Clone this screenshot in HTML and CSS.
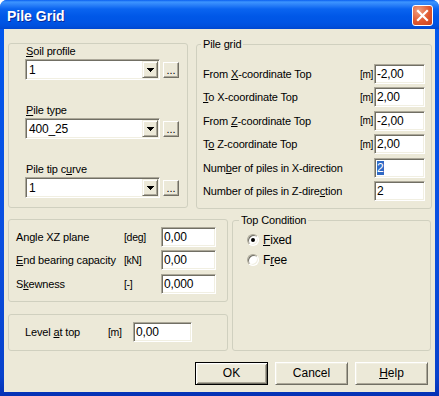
FILE: index.html
```html
<!DOCTYPE html>
<html lang="en">
<head>
  <meta charset="UTF-8">
  <title>Pile Grid</title>
  <link rel="stylesheet" href="styles.css">
</head>
<body>
  <div class="window">
    <div class="titlebar">
      <span class="title">Pile Grid</span>
      <button class="close" aria-label="Close">
        <svg width="13" height="13" viewBox="0 0 13 13"><path d="M2 2L11 11M11 2L2 11" stroke="#fff" stroke-width="2.2" stroke-linecap="square"/></svg>
      </button>
    </div>

    <div class="client">
      <div class="top-row">
        <fieldset class="group soil">
          <div class="soil-fields">
            <div class="field">
              <label><u>S</u>oil profile</label>
              <div class="combo-row">
                <div class="combo"><span class="combo-text">1</span><span class="drop"><svg width="7" height="4"><path d="M0 0h7L3.5 4z"/></svg></span></div>
                <button class="more">...</button>
              </div>
            </div>
            <div class="field">
              <label><u>P</u>ile type</label>
              <div class="combo-row">
                <div class="combo"><span class="combo-text">400_25</span><span class="drop"><svg width="7" height="4"><path d="M0 0h7L3.5 4z"/></svg></span></div>
                <button class="more">...</button>
              </div>
            </div>
            <div class="field">
              <label>Pile tip c<u>u</u>rve</label>
              <div class="combo-row">
                <div class="combo"><span class="combo-text">1</span><span class="drop"><svg width="7" height="4"><path d="M0 0h7L3.5 4z"/></svg></span></div>
                <button class="more">...</button>
              </div>
            </div>
          </div>
        </fieldset>

        <fieldset class="group grid">
          <legend>Pile grid</legend>
          <div class="params grid-params">
            <span>From <u>X</u>-coordinate Top</span><span class="unit">[m]</span><span class="edit">-2,00</span>
            <span><u>T</u>o X-coordinate Top</span><span class="unit">[m]</span><span class="edit">2,00</span>
            <span>From <u>Z</u>-coordinate Top</span><span class="unit">[m]</span><span class="edit">-2,00</span>
            <span>T<u>o</u> Z-coordinate Top</span><span class="unit">[m]</span><span class="edit">2,00</span>
            <span>Num<u>b</u>er of piles in X-direction</span><span></span><span class="edit"><span class="sel">2</span></span>
            <span>Number of piles in Z-dire<u>c</u>tion</span><span></span><span class="edit">2</span>
          </div>
        </fieldset>
      </div>

      <div class="bottom-row">
        <div class="left-col">
          <fieldset class="group angle">
            <div class="params angle-params">
              <span>Angle XZ plane</span><span class="unit">[deg]</span><span class="edit">0,00</span>
              <span><u>E</u>nd bearing capacity</span><span class="unit">[kN]</span><span class="edit">0,00</span>
              <span>S<u>k</u>ewness</span><span class="unit">[-]</span><span class="edit">0,000</span>
            </div>
          </fieldset>
          <fieldset class="group level">
            <div class="params level-params">
              <span>Level <u>a</u>t top</span><span class="unit">[m]</span><span class="edit">0,00</span>
            </div>
          </fieldset>
        </div>

        <fieldset class="group topcond">
          <legend>Top Condition</legend>
          <div class="radios">
            <div class="radio"><span class="dot checked"></span><span><u>F</u>ixed</span></div>
            <div class="radio"><span class="dot"></span><span>F<u>r</u>ee</span></div>
          </div>
        </fieldset>
      </div>

      <div class="buttons">
        <button class="btn default">OK</button>
        <button class="btn">Cancel</button>
        <button class="btn"><u>H</u>elp</button>
      </div>
    </div>
  </div>
</body>
</html>
```

FILE: styles.css
```css
* {
  box-sizing: border-box;
}
body {
  margin: 0;
  background: #fff;
  font-family: "Liberation Sans", Arial, sans-serif;
  font-size: 11px;
  letter-spacing: -0.15px;
  color: #000;
}
u {
  text-decoration-thickness: 1px;
  text-underline-offset: 1px;
}
.window {
  width: 439px;
  height: 396px;
  display: flex;
  flex-direction: column;
  border-radius: 7px 7px 0 0;
  overflow: hidden;
  background: linear-gradient(to bottom, #0058ee, #0a4fe0 60%, #0842cc 95%, #0531b4);
}
.titlebar {
  height: 29px;
  flex: none;
  display: flex;
  align-items: center;
  justify-content: space-between;
  padding: 2px 6px 0 7px;
  background: linear-gradient(to bottom, #0a5ff0 0px, #3d95ff 2px, #2a80f8 5px, #0a64f0 9px, #0058e8 16px, #0055e5 22px, #0050dd 26px, #0047d0 29px);
}
.title {
  color: #fff;
  font-size: 14px;
  font-weight: bold;
  letter-spacing: 0;
  text-shadow: 1px 1px 0 #0a2a9a;
}
.close {
  width: 21px;
  height: 21px;
  padding: 0;
  margin-top: -1px;
  display: flex;
  align-items: center;
  justify-content: center;
  border: 1px solid #fff;
  border-radius: 3px;
  background: radial-gradient(circle at 30% 25%, #f0a080, #e0582f 55%, #c8401e);
}
.client {
  flex: 1;
  margin: 0 4px 4px;
  background: #ece9d8;
  padding: 9px 3px 0 4px;
}
.group {
  margin: 0;
  min-width: 0;
  border: 1px solid #d0d0bf;
  border-radius: 3px;
}
legend {
  padding: 0 2px;
  margin-left: -2px;
  line-height: 13px;
}
.top-row {
  display: flex;
  gap: 8px;
  align-items: flex-start;
}
.soil {
  width: 180px;
  margin-top: 5px;
  padding: 1px 8px 9px 16px;
}
.soil-fields {
  display: flex;
  flex-direction: column;
  gap: 24px;
}
.field {
  display: flex;
  flex-direction: column;
  gap: 1px;
}
.field label {
  line-height: 13px;
  padding-left: 1px;
}
.combo-row {
  display: flex;
  align-items: center;
  gap: 3px;
}
.combo {
  width: 135px;
  height: 21px;
  display: flex;
  align-items: center;
  justify-content: space-between;
  background: #fff;
  border: 1px solid;
  border-color: #aca899 #fff #fff #aca899;
  box-shadow: inset 1px 1px 0 #716f64, inset -1px -1px 0 #f1efe2;
  padding: 1px;
}
.combo-text {
  padding-left: 2px;
  font-size: 12px;
}
.drop {
  width: 16px;
  height: 17px;
  display: flex;
  align-items: center;
  justify-content: center;
  background: #ece9d8;
  border: 1px solid;
  border-color: #f1efe2 #716f64 #716f64 #f1efe2;
  box-shadow: inset 1px 1px 0 #fff, inset -1px -1px 0 #aca899;
}
.drop svg {
  shape-rendering: crispEdges;
}
.more {
  width: 16px;
  height: 16px;
  padding: 0;
  font: inherit;
  line-height: 12px;
  background: #ece9d8;
  border: 1px solid;
  border-color: #fff #716f64 #716f64 #fff;
  box-shadow: inset -1px -1px 0 #aca899;
}
.grid {
  width: 236px;
  padding: 13px 6px 7px 6px;
}
.params {
  display: grid;
  align-items: center;
  white-space: nowrap;
}
.unit {
  font-size: 10.5px;
  letter-spacing: -0.3px;
}
.grid-params .unit {
  font-size: 10px;
}
.grid-params {
  grid-template-columns: 1fr 14px 51px;
  row-gap: 3.4px;
}
.edit {
  height: 20px;
  line-height: 18px;
  padding-left: 2px;
  background: #fff;
  border: 1px solid;
  border-color: #aca899 #fff #fff #aca899;
  box-shadow: inset 1px 1px 0 #716f64, inset -1px -1px 0 #f1efe2;
  font-size: 12px;
}
.sel {
  background: #316ac5;
  color: #fff;
  display: inline-block;
  line-height: 14px;
}
.bottom-row {
  display: flex;
  gap: 4px;
  align-items: stretch;
  margin-top: 5px;
}
.left-col {
  width: 220px;
  margin-top: 5px;
  display: flex;
  flex-direction: column;
  gap: 12px;
}
.angle {
  padding: 7px 11px 7px 7px;
}
.angle-params {
  grid-template-columns: 1fr 37px 55px;
  row-gap: 3.5px;
}
.level {
  padding: 7px 35px 8px 16px;
}
.level-params {
  grid-template-columns: 83px 25px 59px;
}
.topcond {
  width: 199px;
  padding: 6px 8px 0 14px;
}
.topcond legend {
  margin-left: -8px;
}
.radios {
  display: flex;
  flex-direction: column;
  gap: 5px;
}
.radio {
  height: 15px;
  display: flex;
  align-items: center;
  gap: 4px;
  font-size: 12px;
}
.dot {
  width: 12px;
  height: 12px;
  border-radius: 50%;
  background: #fff;
  border: 1px solid;
  border-color: #aca899 #fff #fff #aca899;
  box-shadow: inset 1px 1px 0 #716f64, inset -1px -1px 0 #f1efe2;
  display: flex;
  align-items: center;
  justify-content: center;
}
.dot.checked::after {
  content: "";
  width: 4px;
  height: 4px;
  border-radius: 50%;
  background: #000;
}
.buttons {
  display: flex;
  justify-content: flex-end;
  gap: 7px;
  margin-top: 11px;
  margin-right: 4px;
}
.btn {
  width: 73px;
  height: 23px;
  padding: 0;
  font: inherit;
  font-size: 12px;
  background: #ece9d8;
  border: 1px solid;
  border-color: #fff #716f64 #716f64 #fff;
  box-shadow: inset 1px 1px 0 #f1efe2, inset -1px -1px 0 #aca899;
}
.btn.default {
  border-color: #000;
  box-shadow: inset 1px 1px 0 #fff, inset -1px -1px 0 #716f64, inset 2px 2px 0 #f1efe2, inset -2px -2px 0 #aca899;
}
```
